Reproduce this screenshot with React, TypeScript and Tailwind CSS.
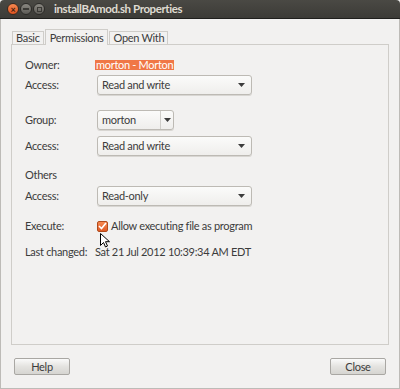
import type { ReactNode } from 'react';

const font = { fontFamily: 'Lato, "Liberation Sans", sans-serif' };

function Arrow() {
  return (
    <svg width="7" height="4" viewBox="0 0 7 4">
      <path d="M0 0h7L3.5 4z" fill="#3c3c3c" />
    </svg>
  );
}

function Combo({ value }: { value: string }) {
  return (
    <div className="w-[155px] h-[20px] flex items-center justify-between pl-[4px] pr-[6px] rounded-[3px] border border-[#bdbab4] bg-gradient-to-b from-[#fbfbfa] to-[#efeeec] shadow-[0_1px_0_#d8d6d2]">
      <span>{value}</span>
      <Arrow />
    </div>
  );
}

function Row({ label, children, className = '' }: { label: string; children: ReactNode; className?: string }) {
  return (
    <div className={`flex items-center ${className}`}>
      <span className="w-[72px] shrink-0 whitespace-nowrap">{label}</span>
      {children}
    </div>
  );
}

function Button({ label }: { label: string }) {
  return (
    <div className="w-[56px] h-[17px] flex items-center justify-center rounded-[2px] border border-[#a9a7a3] bg-gradient-to-b from-[#fafafa] via-[#e4e3e0] to-[#d6d5d1] text-[#3c3c3c]">
      {label}
    </div>
  );
}

export default function App() {
  return (
    <div
      className="relative w-[400px] h-[389px] flex flex-col bg-[#f2f1f0] text-[#3c3c3c] text-[11px] leading-[14px] tracking-[-0.3px] overflow-hidden"
      style={font}
    >
      {/* Title bar */}
      <div className="h-[19px] shrink-0 flex items-center bg-gradient-to-b from-[#4a4944] to-[#3c3b37] border-b border-[#1f1f1d] rounded-t-[4px]">
        <div className="flex items-center gap-[1px] pl-[7px]">
          <div className="w-[12px] h-[12px] rounded-full bg-gradient-to-b from-[#f6884f] to-[#e0531f] border border-[#3a2a20] flex items-center justify-center text-[#3c2010] text-[9px] leading-none font-bold">
            ×
          </div>
          <div className="w-[12px] h-[12px] rounded-full bg-gradient-to-b from-[#8a8882] to-[#5d5b56] border border-[#2c2b28] flex items-center justify-center">
            <div className="w-[6px] h-[2px] bg-[#3a3935]" />
          </div>
          <div className="w-[12px] h-[12px] rounded-full bg-gradient-to-b from-[#8a8882] to-[#5d5b56] border border-[#2c2b28] flex items-center justify-center">
            <div className="w-[5px] h-[5px] border border-[#3a3935]" />
          </div>
        </div>
        <span className="ml-[9px] text-[#dfdbd2] font-bold text-[11.5px] tracking-[-0.4px]">installBAmod.sh Properties</span>
      </div>

      {/* Body */}
      <div className="flex-1 flex flex-col border-x border-b border-[#bdbbb7] px-[10px]">
        {/* Tabs */}
        <div className="flex items-end h-[25px] pl-[1px]">
          <div className="h-[13px] px-[3px] flex items-center border border-b-0 border-[#cfcdc9]">Basic</div>
          <div className="relative top-[1px] h-[16px] px-[4px] ml-[1px] flex items-start pt-[1px] border border-b-0 border-[#cfcdc9] bg-[#f2f1f0] z-10">
            Permissions
          </div>
          <div className="h-[13px] px-[3px] ml-[1px] flex items-center border border-b-0 border-[#cfcdc9]">Open With</div>
        </div>

        {/* Panel */}
        <div className="h-[301px] border border-[#cfcdc9] pl-[13px] pt-[13px] flex flex-col">
          <Row label="Owner:" className="h-[14px]">
            <span className="ml-[-2px] h-[10px] flex items-center px-[1px] bg-[#f07746] text-white">morton - Morton</span>
          </Row>
          <Row label="Access:" className="mt-[3px]">
            <Combo value="Read and write" />
          </Row>
          <Row label="Group:" className="mt-[15px]">
            <div className="w-[77px] h-[20px] flex items-center rounded-[3px] border border-[#bdbab4] bg-gradient-to-b from-[#fbfbfa] to-[#efeeec] shadow-[0_1px_0_#d8d6d2]">
              <span className="flex-1 pl-[4px]">morton</span>
              <div className="w-[13px] h-full flex items-center justify-center border-l border-[#cfcdc9]">
                <Arrow />
              </div>
            </div>
          </Row>
          <Row label="Access:" className="mt-[6px]">
            <Combo value="Read and write" />
          </Row>
          <div className="mt-[12px] h-[14px] flex items-center">Others</div>
          <Row label="Access:" className="mt-[4px]">
            <Combo value="Read-only" />
          </Row>
          <Row label="Execute:" className="mt-[13px] h-[14px]">
            <div className="w-[11px] h-[11px] rounded-[2px] border border-[#b04a1c] bg-gradient-to-b from-[#f6884f] to-[#e05a25] flex items-center justify-center">
              <svg width="9" height="8" viewBox="0 0 9 8">
                <path d="M1 4l2.5 2.5L8 1" stroke="#fff" strokeWidth="1.6" fill="none" />
              </svg>
            </div>
            <span className="ml-[3px]">Allow executing file as program</span>
          </Row>
          <Row label="Last changed:" className="mt-[12px] h-[14px]">
            <span className="ml-[-2px]">Sat 21 Jul 2012 10:39:34 AM EDT</span>
          </Row>
        </div>

        {/* Buttons */}
        <div className="flex justify-between px-[3px] mt-[13px]">
          <Button label="Help" />
          <Button label="Close" />
        </div>
      </div>

      {/* Mouse cursor */}
      <svg className="absolute left-[100px] top-[233px]" width="10" height="15" viewBox="0 0 10 15">
        <path d="M0.5 0.5v12l3-3 2 4.5 2-1-2-4.3h4z" fill="#fff" stroke="#000" strokeWidth="1" />
      </svg>
    </div>
  );
}
